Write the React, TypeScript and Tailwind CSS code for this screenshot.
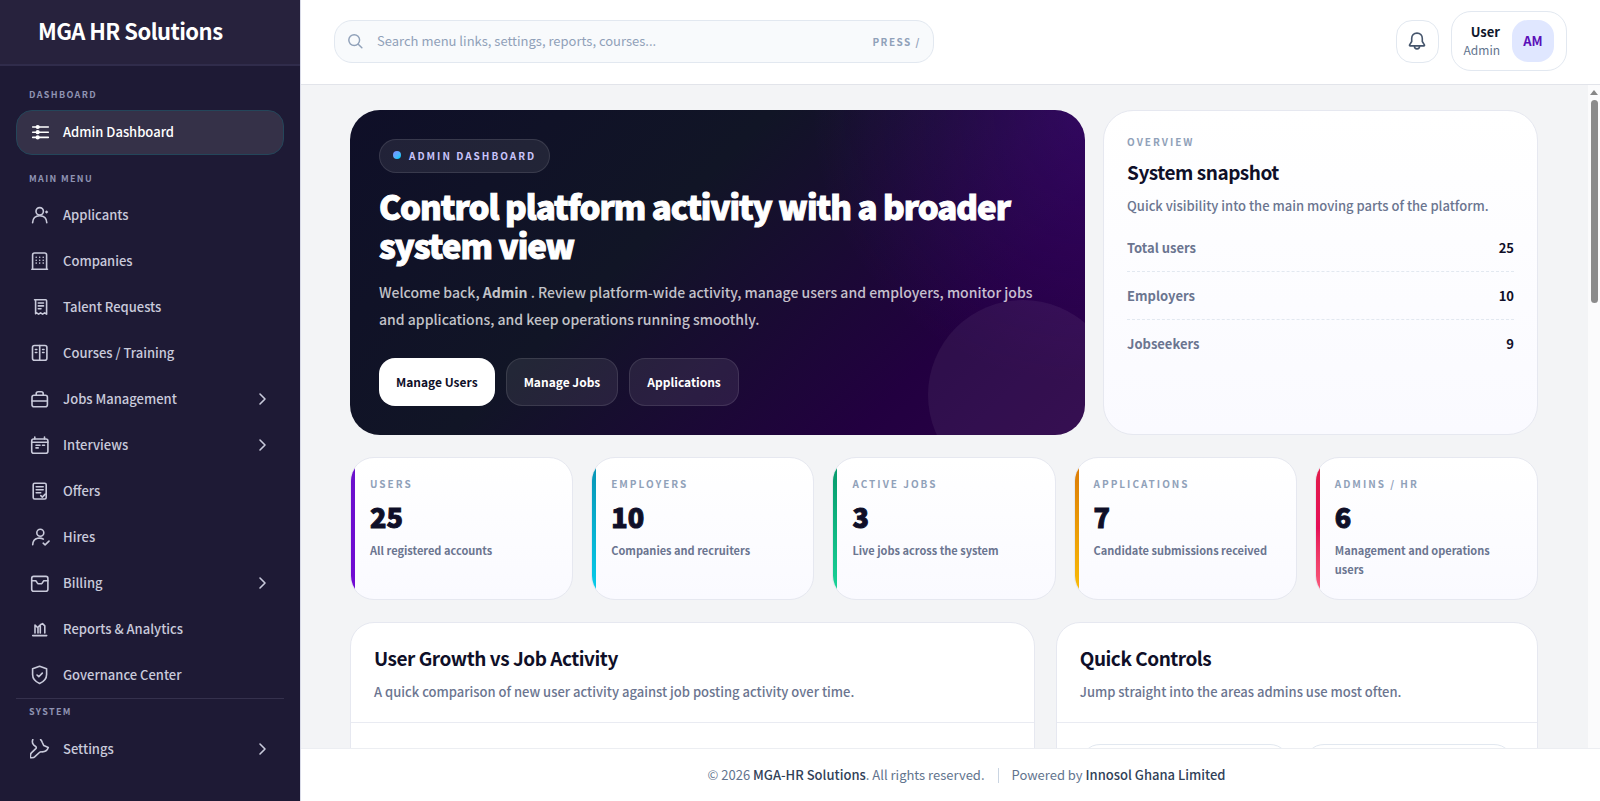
import React from "react";

type IconProps = { children: React.ReactNode; className?: string };

const Icon = ({ children, className = "h-5 w-5" }: IconProps) => (
  <svg
    viewBox="0 0 20 20"
    className={`${className} shrink-0`}
    fill="none"
    stroke="currentColor"
    strokeWidth="1.6"
    strokeLinecap="round"
    strokeLinejoin="round"
    aria-hidden="true"
  >
    {children}
  </svg>
);

type NavItem = {
  label: string;
  icon: React.ReactNode;
  hasChildren?: boolean;
};

const dashboardIcon = (
  <>
    <path d="M2.7 5h15.6M2.7 10.2h15.6M2.7 15.4h15.6" />
    <circle cx="7.7" cy="5" r="1.3" fill="currentColor" />
    <circle cx="7.7" cy="10.2" r="1.3" fill="currentColor" />
    <circle cx="7.7" cy="15.4" r="1.3" fill="currentColor" />
  </>
);

const mainMenu: NavItem[] = [
  {
    label: "Applicants",
    icon: (
      <>
        <circle cx="9.7" cy="6.3" r="3.7" />
        <path d="M2.6 17.8c.2-4.4 3-7 7.1-7s6.9 2.6 7.1 7M16.6 6.2v1.6M15.8 7h1.6" />
      </>
    ),
  },
  {
    label: "Companies",
    icon: (
      <>
        <path d="M2.6 18V4q0-2 2-2h10q2 0 2 2v14M1.8 18.2h15.7" />
        <path d="M6.2 6.3h.01M9.7 6.3h.01M13.2 6.3h.01M6.2 9.2h.01M9.7 9.2h.01M13.2 9.2h.01M6.2 12.1h.01M9.7 12.1h.01M13.2 12.1h.01" />
      </>
    ),
  },
  {
    label: "Talent Requests",
    icon: (
      <path d="M4.6 2.7h11q1 0 1 1v13.5l-2-1.3-2 1.3-2-1.3-2 1.3-2-1.3-1 .8V3.7q0-1-1-1M8.3 6h5.2M8.3 8.9h5.2M8.3 11.8h2.7" />
    ),
  },
  {
    label: "Courses / Training",
    icon: (
      <>
        <rect x="2.5" y="2.5" width="14.4" height="14.8" rx="2" />
        <path d="M9.7 2.5v14.8M5.4 6.5h1.4M5.4 9.5h1.4M12.6 6.5h1.4M12.6 9.5h1.4" />
      </>
    ),
  },
  {
    label: "Jobs Management",
    hasChildren: true,
    icon: (
      <>
        <rect x="2" y="6.2" width="15.4" height="11.6" rx="2" />
        <path d="M6.2 6.2V4.7q0-2 2-2h3q2 0 2 2v1.500M2 12h15.400" />
      </>
    ),
  },
  {
    label: "Interviews",
    hasChildren: true,
    icon: (
      <>
        <rect x="1.7" y="4" width="16.2" height="14.2" rx="2" />
        <path d="M4.8 2v2M14.5 2v2M1.7 7.2h16.2M6 10.3h4M12.5 10.3h2M6 12.9h2.2" />
      </>
    ),
  },
  {
    label: "Offers",
    icon: (
      <>
        <rect x="3.2" y="2.2" width="13" height="15.8" rx="1.5" />
        <path d="M6.2 5.7h7M6.2 8.7h7M6.2 11.7h4.5M10.8 14.6l1.5 1.5 3-3" />
      </>
    ),
  },
  {
    label: "Hires",
    icon: (
      <>
        <circle cx="10.3" cy="5.7" r="3.5" />
        <path d="M2.7 17.8c.2-3.9 1.9-5.9 5-6.5 2-.4 4-.2 5.6.8M13.2 16.2l1.9 1.7 3.9-3.8" />
      </>
    ),
  },
  {
    label: "Billing",
    hasChildren: true,
    icon: (
      <>
        <rect x="1.7" y="3.4" width="16.2" height="14.8" rx="2" />
        <path d="M1.7 7.7h4.1l1.5 2.2q.7.9 1.8.9h1.4q1.1 0 1.8-.9l1.5-2.2h4.1" />
      </>
    ),
  },
  {
    label: "Reports & Analytics",
    icon: (
      <path d="M2.7 16.6h14M5 14V6l3 3v5M8 8.2l2.3-2.300V14M10.300 5.800l2.200-1.200 2.300 2.300V14" />
    ),
  },
  {
    label: "Governance Center",
    icon: (
      <>
        <path d="M9.6 1.2l7 2.6v5.7c0 4.2-2.7 7.1-7 8.9-4.3-1.8-7-4.7-7-8.9V3.8z" />
        <path d="M7 10l1.8 1.7 3.5-3.6" />
      </>
    ),
  },
];

const settingsIcon = (
  <path d="M2.8.6q-1.2 3.2.8 5.2l2.2 1.900q1 .9 0 1.900L1.400 13.800q-1.300 1.200-.9 4.800 3.300.4 4.400-.9l4.500-4.200q1.200-1 2.500-.6 4.800.2 6.400-4.300l-4.500-2-1.500-3.100q-.7-1.900-1.700-2.900" />
);

const NavLink = ({ item, active = false }: { item: NavItem; active?: boolean }) => (
  <a
    href="#"
    aria-current={active ? "page" : undefined}
    className={`flex items-center gap-[13px] rounded-2xl border pr-[10px] pl-[13px] text-[13px] font-medium ${
      active
        ? "h-[45px] border-[#24465a] bg-[#353148] pb-0.5 text-white"
        : "h-[46px] border-transparent text-[#c9cadb]"
    }`}
  >
    <Icon>{item.icon}</Icon>
    <span className="flex-1">{item.label}</span>
    {item.hasChildren && (
      <Icon>
        <path d="M7 5l5 5-5 5" />
      </Icon>
    )}
  </a>
);

const NavHeading = ({ children }: { children: React.ReactNode }) => (
  <h2 className="px-[13px] text-[9px] leading-4 font-bold tracking-[0.15em] text-[#8f93b2] uppercase">
    {children}
  </h2>
);

const Sidebar = () => (
  <aside className="flex w-[301px] shrink-0 flex-col border-r border-[#d9dbe8] bg-[#1e1a35]">
    <div className="flex h-[66px] shrink-0 items-center border-b-2 border-[#302c4b] bg-[#27223d] px-[38px] pb-1">
      <span className="text-[22px] leading-8 font-bold tracking-tight text-white">MGA HR Solutions</span>
    </div>
    <nav className="flex flex-col px-4 pt-[21px]" aria-label="Main">
      <NavHeading>Dashboard</NavHeading>
      <div className="mt-[7px]">
        <NavLink item={{ label: "Admin Dashboard", icon: dashboardIcon }} active />
      </div>
      <div className="mt-4 mb-[5px]">
        <NavHeading>Main Menu</NavHeading>
      </div>
      {mainMenu.map((item) => (
        <NavLink key={item.label} item={item} />
      ))}
      <div className="border-t border-[#35314d] pt-[5px] pb-1.5">
        <NavHeading>System</NavHeading>
      </div>
      <NavLink item={{ label: "Settings", icon: settingsIcon, hasChildren: true }} />
    </nav>
  </aside>
);

const TopBar = () => (
  <header className="flex h-[85px] shrink-0 items-center justify-between border-b border-[#e2e4ea] bg-white px-[33px] pb-0.5">
    <label className="flex h-[43px] w-[600px] items-center gap-3 rounded-[18px] border border-slate-200 bg-slate-50 px-3 text-slate-400">
      <Icon className="h-[18px] w-[18px]">
        <circle cx="8" cy="9" r="6" />
        <path d="M12.500 13.500l4 4" />
      </Icon>
      <input
        type="search"
        aria-label="Search"
        placeholder="Search menu links, settings, reports, courses..."
        className="min-w-0 flex-1 bg-transparent text-[13px] text-slate-700 outline-none placeholder:text-slate-400"
      />
      <span className="text-[10px] font-bold tracking-[0.15em] uppercase">Press /</span>
    </label>
    <div className="flex items-center gap-3">
      <button
        type="button"
        aria-label="Notifications"
        className="flex h-[43px] w-[43px] items-center justify-center rounded-2xl border border-slate-200 bg-white text-slate-600"
      >
        <Icon>
          <path d="M10 2.1c-3.2 0-5.3 2.3-5.3 5.3v3.1l-2.1 3.4q-.4 1 .6 1h13.6q1 0 .6-1l-2.1-3.4V7.4c0-3-2.1-5.3-5.3-5.3zM7.3 15c.2 3.8 5.2 3.8 5.4 0" />
        </Icon>
      </button>
      <button
        type="button"
        className="flex h-[60px] items-center gap-3 rounded-[20px] border border-slate-200 bg-white px-3 text-right"
      >
        <span className="flex flex-col">
          <span className="text-[13px] leading-[18px] font-bold text-slate-900">User</span>
          <span className="text-xs leading-[18px] text-slate-500">Admin</span>
        </span>
        <span className="flex h-[42px] w-[42px] items-center justify-center rounded-2xl bg-indigo-100 text-[13px] font-bold text-[#5b0fb8]">
          AM
        </span>
      </button>
    </div>
  </header>
);

const Hero = () => (
  <section className="relative overflow-hidden rounded-[30px] bg-[radial-gradient(circle_at_top_right,rgba(106,17,203,0.25),transparent_34%),linear-gradient(135deg,#0f0f28_0%,#111526_40%,#220040_78%,#2a0048_100%)] p-[29px]">
    <div className="absolute -right-[33px] -bottom-[55px] h-[190px] w-[190px] rounded-full bg-white/6" />
    <div className="relative">
      <span className="inline-flex h-[34px] items-center gap-2 rounded-full border border-white/10 bg-white/8 px-[13px] pb-0.5 text-[10px] font-bold tracking-[2px] text-[#c9c5fb] uppercase">
        <span className="h-2 w-2 rounded-full bg-linear-to-br from-indigo-400 to-cyan-400" />
        Admin Dashboard
      </span>
      <h1 className="mt-[14px] text-[33px] leading-[39px] font-black tracking-[-0.03em] text-white [-webkit-text-stroke:1px]">
        Control platform activity with a broader system view
      </h1>
      <p className="mt-[14px] text-sm leading-[27px] font-medium text-white/75">
        Welcome back, <strong className="font-bold">Admin</strong> . Review platform-wide activity, manage users and
        employers, monitor jobs and applications, and keep operations running smoothly.
      </p>
      <div className="mt-[25px] flex gap-[11px] text-xs font-bold">
        <a href="#" className="flex h-12 items-center rounded-2xl bg-white px-[17px] text-[#0f0f28]">
          Manage Users
        </a>
        <a href="#" className="flex h-12 items-center rounded-2xl border border-white/10 bg-white/8 px-[17px] text-white">
          Manage Jobs
        </a>
        <a href="#" className="flex h-12 items-center rounded-2xl border border-white/10 bg-white/8 px-[17px] text-white">
          Applications
        </a>
      </div>
    </div>
  </section>
);

const snapshot = [
  { label: "Total users", value: 25 },
  { label: "Employers", value: 10 },
  { label: "Jobseekers", value: 9 },
];

const Snapshot = () => (
  <section className="rounded-[30px] border border-[#e6e8f0] bg-linear-to-b from-white to-[#fafaff] px-[23px] pt-[23px]">
    <p className="text-[10px] leading-4 font-bold tracking-[2px] text-slate-400 uppercase">Overview</p>
    <h2 className="mt-2 text-[19px] leading-7 font-bold tracking-tight text-[#0f0f28]">System snapshot</h2>
    <p className="mt-2 text-[13px] leading-6 font-medium text-[#6b7590]">
      Quick visibility into the main moving parts of the platform.
    </p>
    <dl className="mt-[6px]">
      {snapshot.map((row) => (
        <div
          key={row.label}
          className="flex h-12 items-center justify-between border-b border-dashed border-slate-200 text-[13px] font-bold last:border-b-0"
        >
          <dt className="text-[#6b7590]">{row.label}</dt>
          <dd className="text-[#0f0f28]">{row.value}</dd>
        </div>
      ))}
    </dl>
  </section>
);

const stats = [
  { label: "Users", value: 25, note: "All registered accounts", bar: "from-[#6a11cb] to-[#7209d4]" },
  { label: "Employers", value: 10, note: "Companies and recruiters", bar: "from-[#0891b2] to-[#06d0ee]" },
  { label: "Active Jobs", value: 3, note: "Live jobs across the system", bar: "from-[#059669] to-[#1ad69a]" },
  { label: "Applications", value: 7, note: "Candidate submissions received", bar: "from-[#d97706] to-[#fbbf08]" },
  { label: "Admins / HR", value: 6, note: "Management and operations users", bar: "from-[#e11d48] via-[#e60f58] to-[#fb5f80]" },
];

const StatCards = () => (
  <section className="grid grid-cols-5 gap-[18px]">
    {stats.map((stat) => (
      <article
        key={stat.label}
        className="flex min-h-[143px] overflow-hidden rounded-[24px] border border-[#e6e8f0] bg-linear-to-b from-white to-[#fafaff]"
      >
        <div className={`w-1 shrink-0 bg-linear-to-b ${stat.bar}`} />
        <div className="pt-[18px] pr-5 pl-[15px]">
          <p className="text-[10px] leading-4 font-bold tracking-[2px] text-slate-400 uppercase">{stat.label}</p>
          <p className="mt-[7px] text-[27px] leading-9 font-black text-[#0f0f28] [-webkit-text-stroke:1px]">{stat.value}</p>
          <p className="mt-1.5 text-[11px] leading-[19px] font-bold text-[#6b7590]">{stat.note}</p>
        </div>
      </article>
    ))}
  </section>
);

type PanelProps = { title: string; subtitle: string; children: React.ReactNode };

const Panel = ({ title, subtitle, children }: PanelProps) => (
  <section className="rounded-[24px] border border-[#e6e8f0] bg-white">
    <div className="border-b border-[#e9ebf2] px-[23px] pt-[21px] pb-[18px]">
      <h2 className="text-[19px] leading-7 font-bold tracking-tight text-[#0f0f28]">{title}</h2>
      <p className="mt-2 text-[13px] leading-6 font-medium text-[#6b7590]">{subtitle}</p>
    </div>
    <div className="px-[23px] py-[21px]">{children}</div>
  </section>
);

const ScrollTrack = () => (
  <div className="flex w-3 shrink-0 flex-col items-center bg-[#fbfbfc] pt-[5px]" aria-hidden="true">
    <svg viewBox="0 0 8 5" className="h-[5px] w-2 fill-[#878787]">
      <path d="M4 0l4 5H0z" />
    </svg>
    <div className="mt-[5px] h-[203px] w-[7px] rounded-full bg-[#8b8b8b]" />
  </div>
);

const Footer = () => (
  <footer className="flex h-[53px] shrink-0 items-center justify-center border-t border-[#eceef2] bg-white pl-8 text-[13px] text-slate-500">
    <span>
      © 2026 <strong className="font-medium text-slate-700">MGA-HR Solutions</strong>. All rights reserved.
    </span>
    <span className="mx-[13px] h-[15px] w-px bg-slate-300" />
    <span>
      Powered by <strong className="font-medium text-slate-700">Innosol Ghana Limited</strong>
    </span>
  </footer>
);

export default function App() {
  return (
    <div className="flex h-screen overflow-hidden bg-[#f3f4f6] font-['Noto_Sans_CJK_SC',sans-serif]">
      <Sidebar />
      <div className="flex min-w-0 flex-1 flex-col">
        <TopBar />
        <div className="flex min-h-0 flex-1">
          <main className="flex min-w-0 flex-1 flex-col gap-[22px] overflow-hidden pt-[25px] pr-[50px] pl-[49px]">
            <div className="grid shrink-0 grid-cols-[1.69fr_1fr] gap-[18px]">
              <Hero />
              <Snapshot />
            </div>
            <div className="shrink-0">
              <StatCards />
            </div>
            <div className="grid shrink-0 grid-cols-[1.42fr_1fr] gap-[21px]">
              <Panel title="User Growth vs Job Activity" subtitle="A quick comparison of new user activity against job posting activity over time.">
                <div className="h-60" />
              </Panel>
              <Panel title="Quick Controls" subtitle="Jump straight into the areas admins use most often.">
                <div className="grid grid-cols-2 gap-3.5">
                  <div className="h-24 rounded-[20px] border border-slate-200 bg-white" />
                  <div className="h-24 rounded-[20px] border border-slate-200 bg-white" />
                </div>
              </Panel>
            </div>
          </main>
          <ScrollTrack />
        </div>
        <Footer />
      </div>
    </div>
  );
}
